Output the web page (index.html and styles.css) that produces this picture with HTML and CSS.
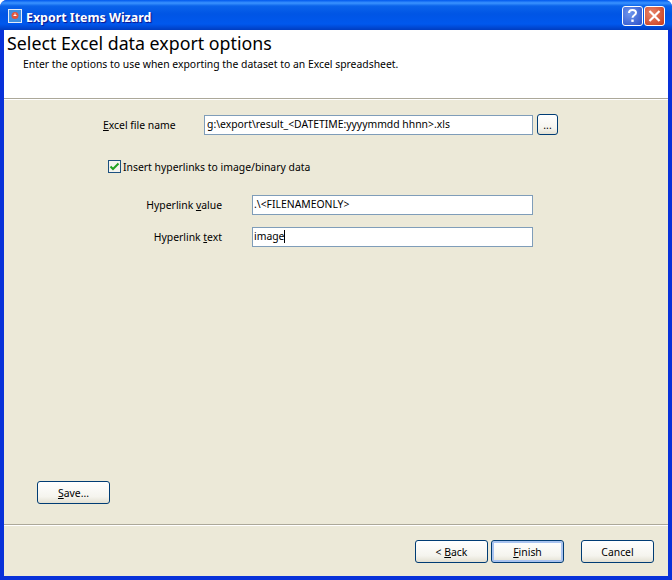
FILE: index.html
```html
<!DOCTYPE html>
<html lang="en">
<head>
    <meta charset="UTF-8">
    <title>Export Items Wizard</title>
    <link rel="stylesheet" href="styles.css">
</head>
<body>

<div class="window">
    <div class="titlebar">
        <svg class="app-icon" width="14" height="14" viewBox="0 0 14 14">
            <rect x="0.5" y="0.5" width="13" height="13" fill="#3f8fe0" stroke="#e4ecf8"/>
            <circle cx="7" cy="6.5" r="3.5" fill="#e2543c"/>
            <path d="M7 4.5v2.5M5.5 6.5h3" stroke="#fff" stroke-width="1"/>
        </svg>
        <span class="title">Export Items Wizard</span>
        <div class="caption-btn help">
            <svg width="21" height="20" viewBox="0 0 21 20">
                <path d="M7 7C7 5 8.500 4 10.500 4S14 5 14 6.800c0 2.500-3.500 2.500-3.500 5" fill="none" stroke="#fff" stroke-width="2"/>
                <rect x="9.300" y="13.500" width="2.400" height="2.400" fill="#fff"/>
            </svg>
        </div>
        <div class="caption-btn close">
            <svg width="21" height="20" viewBox="0 0 21 20">
                <path d="M5.500 5l10 10M15.500 5l-10 10" fill="none" stroke="#fff" stroke-width="2.200"/>
            </svg>
        </div>
    </div>

    <div class="client">
        <div class="page-header">
            <h1>Select Excel data export options</h1>
            <p>Enter the options to use when exporting the dataset to an Excel spreadsheet.</p>
        </div>

        <div class="options">
            <div class="file-row">
                <label class="file-label"><u>E</u>xcel file name</label>
                <div class="input file-input">g:\export\result_&lt;DATETIME:yyyymmdd hhnn&gt;.xls</div>
                <button class="btn browse">...</button>
            </div>

            <div class="check-row">
                <span class="checkbox">
                    <svg width="11" height="11" viewBox="0 0 11 11">
                        <path d="M1.500 5.500l2.500 2.500 5.500-5.500" fill="none" stroke="#21a121" stroke-width="2"/>
                    </svg>
                </span>
                <span>Insert hyperlinks to image/binary data</span>
            </div>

            <div class="link-row">
                <label class="link-label">Hyperlink <u>v</u>alue</label>
                <div class="input link-input">.\&lt;FILENAMEONLY&gt;</div>
            </div>
            <div class="link-row second">
                <label class="link-label">Hyperlink <u>t</u>ext</label>
                <div class="input link-input">image<span class="caret"></span></div>
            </div>
        </div>

        <div class="save-row">
            <button class="btn"><u>S</u>ave...</button>
        </div>

        <div class="footer">
            <button class="btn">&lt; <u>B</u>ack</button>
            <button class="btn default"><u>F</u>inish</button>
            <button class="btn cancel">Cancel</button>
        </div>
    </div>
</div>

</body>
</html>
```

FILE: styles.css
```css
html, body {
    margin: 0;
    padding: 0;
}
body {
    width: 672px;
    height: 580px;
    overflow: hidden;
    font-family: "Noto Sans", Arial, sans-serif;
    font-size: 10.4px;
    color: #000;
}
u {
    text-underline-offset: 1px;
}
.window {
    width: 672px;
    height: 580px;
    display: flex;
    flex-direction: column;
    background-color: #0831d9;
    border-radius: 7px 7px 0 0;
}
.titlebar {
    height: 30px;
    flex: none;
    box-sizing: border-box;
    display: flex;
    align-items: center;
    padding: 2px 7px 0 8px;
    border-radius: 7px 7px 0 0;
    background: linear-gradient(to bottom, #0058ee 0, #3a93ff 3px, #0a63ea 6px, #0055e5 14px, #0058ee 24px, #0046d0 28px, #003dc0 30px);
}
.app-icon {
    flex: none;
}
.title {
    flex: 1;
    margin: 3px 0 0 4px;
    color: #fff;
    font-size: 12.4px;
    font-weight: bold;
    text-shadow: 1px 1px 1px #0f1089;
}
.caption-btn {
    width: 21px;
    height: 20px;
    margin-left: 1px;
    border: 1px solid #fff;
    border-radius: 3px;
    box-sizing: border-box;
    display: flex;
    align-items: center;
    justify-content: center;
}
.caption-btn svg {
    flex: none;
}
.help {
    background: radial-gradient(circle at 35% 35%, #6f97ee, #2a4fc9);
}
.close {
    background: radial-gradient(circle at 35% 35%, #e8856a, #c8391a);
}
.client {
    flex: 1;
    margin: 0 4px 4px;
    display: flex;
    flex-direction: column;
    background-color: #ece9d8;
}
.page-header {
    height: 68px;
    flex: none;
    background-color: #fff;
    border-bottom: 1px solid #aca899;
    box-shadow: 0 1px 0 #fff;
    overflow: hidden;
}
.page-header h1 {
    margin: 3px 0 0 3px;
    font-size: 17.8px;
    font-weight: normal;
    line-height: 20px;
}
.page-header p {
    margin: 4px 0 0 19px;
    line-height: 15px;
}
.options {
    flex: 1;
    padding-top: 15px;
}
.input {
    height: 20px;
    box-sizing: border-box;
    border: 1px solid #7f9db9;
    background-color: #fff;
    padding: 0 2px;
    line-height: 17px;
    white-space: nowrap;
}
.file-row {
    display: flex;
    align-items: center;
    padding-left: 99px;
}
.file-label {
    width: 101px;
}
.file-input {
    width: 329px;
}
.btn {
    width: 73px;
    height: 23px;
    padding: 0;
    box-sizing: border-box;
    border: 1px solid #003c74;
    border-radius: 3px;
    background: linear-gradient(to bottom, #fff 0, #f5f4ee 70%, #e3e0d2 100%);
    font-family: inherit;
    font-size: 10.4px;
    color: #000;
}
.browse {
    width: 21px;
    height: 21px;
    margin-left: 4px;
}
.check-row {
    display: flex;
    align-items: center;
    margin: 25px 0 0 104px;
    height: 13px;
}
.checkbox {
    width: 13px;
    height: 13px;
    box-sizing: border-box;
    border: 1px solid #1c5180;
    background-color: #f4f3ee;
    margin-right: 2px;
    display: flex;
    align-items: center;
    justify-content: center;
}
.link-row {
    display: flex;
    align-items: center;
    height: 21px;
    margin-top: 21px;
}
.link-row.second {
    margin-top: 11px;
}
.link-label {
    width: 218px;
    padding-right: 30px;
    text-align: right;
}
.link-input {
    width: 281px;
    padding-left: 1px;
}
.caret {
    display: inline-block;
    width: 1px;
    height: 13px;
    background-color: #000;
    vertical-align: -3px;
}
.save-row {
    padding: 0 0 20px 33px;
    border-bottom: 1px solid #aca899;
    box-shadow: 0 1px 0 #fff;
}
.save-row .btn {
    display: block;
}
.footer {
    height: 51px;
    flex: none;
    box-sizing: border-box;
    padding: 15px 14px 0 411px;
    display: flex;
    gap: 3px;
}
.btn.default {
    box-shadow: inset 0 0 0 2px #a9c3ef;
}
.btn.cancel {
    margin-left: 14px;
}
```
